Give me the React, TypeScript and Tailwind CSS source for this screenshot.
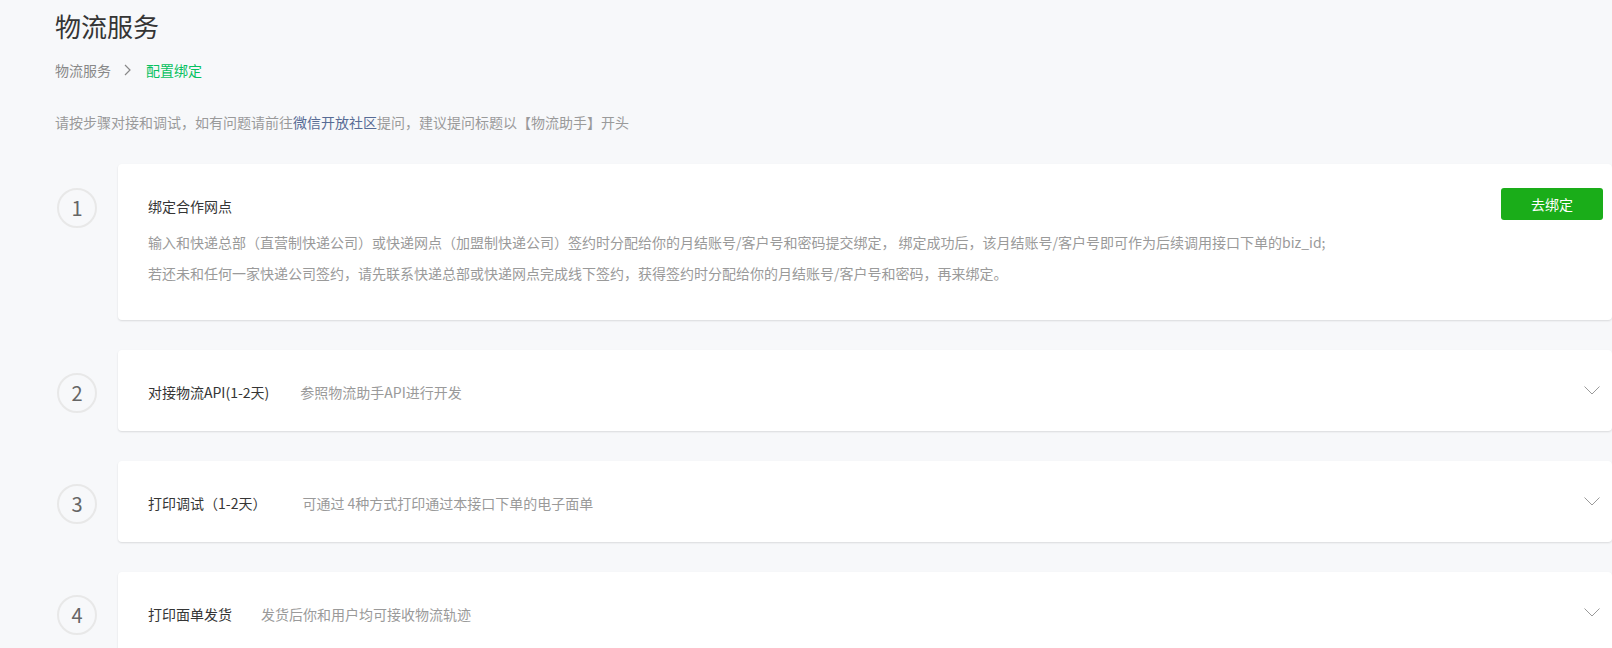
import React from "react";

const font = { fontFamily: '"Noto Sans CJK SC", "Noto Sans", sans-serif' };

function Chevron() {
  return (
    <svg width="16" height="9" viewBox="0 0 16 9" className="mr-[3px]">
      <polyline points="0.5,0.5 8,8 15.5,0.5" fill="none" stroke="#9a9a9a" strokeWidth="1" />
    </svg>
  );
}

function Circle({ n }: { n: number }) {
  return (
    <div className="w-[40px] h-[40px] shrink-0 rounded-full border-2 border-[#e8e8e8] flex items-center justify-center text-[20px] text-[#666] leading-none">
      {n}
    </div>
  );
}

function CollapsedStep({ n, title, desc, gap }: { n: number; title: string; desc: string; gap: string }) {
  return (
    <div className="flex items-start">
      <div className="pt-[23px]">
        <Circle n={n} />
      </div>
      <div className="ml-[21px] flex-1 bg-white rounded-[4px] shadow-[0_1px_2px_rgba(0,0,0,0.12)] h-[81px] pl-[30px] pr-[9px] flex items-center justify-between">
        <div className="flex items-center text-[14px] leading-[20px] pt-[2px]">
          <span className="text-[#353535]">{title}</span>
          <span className={`text-[#9a9a9a] ${gap}`}>{desc}</span>
        </div>
        <Chevron />
      </div>
    </div>
  );
}

export default function App() {
  return (
    <div className="min-h-[648px] w-full bg-[#f7f8fa] overflow-hidden" style={font}>
      <div className="pl-[55px]">
        <h1 className="pt-[8px] text-[26px] leading-[36px] text-[#353535] font-normal">物流服务</h1>
        <div className="mt-[16px] flex items-center text-[14px] leading-[20px]">
          <span className="text-[#888]">物流服务</span>
          <svg width="8" height="12" viewBox="0 0 8 12" className="ml-[13px] mr-[14px]">
            <polyline points="1,1 6,6 1,11" fill="none" stroke="#888" strokeWidth="1.2" />
          </svg>
          <span className="text-[#07c160]">配置绑定</span>
        </div>
        <p className="mt-[31px] text-[14px] leading-[22px] text-[#9a9a9a]">
          请按步骤对接和调试，如有问题请前往<span className="text-[#576b95]">微信开放社区</span>提问，建议提问标题以【物流助手】开头
        </p>

        <div className="mt-[31px] flex flex-col gap-[30px] pl-[2px]">
          <div className="flex items-start">
            <div className="pt-[24px]">
              <Circle n={1} />
            </div>
            <div className="ml-[21px] flex-1 bg-white rounded-[4px] shadow-[0_1px_2px_rgba(0,0,0,0.12)] h-[156px] pl-[30px] pr-[9px] pt-[24px]">
              <div className="flex items-center justify-between h-[32px]">
                <span className="text-[14px] leading-[20px] text-[#353535] pt-[3px]">绑定合作网点</span>
                <button className="w-[102px] h-[32px] rounded-[3px] bg-[#1aad19] text-white text-[14px]">去绑定</button>
              </div>
              <p className="mt-[12px] text-[14px] leading-[20px] text-[#9a9a9a]">
                输入和快递总部（直营制快递公司）或快递网点（加盟制快递公司）签约时分配给你的月结账号/客户号和密码提交绑定， 绑定成功后，该月结账号/客户号即可作为后续调用接口下单的biz_id;
              </p>
              <p className="mt-[11px] text-[14px] leading-[20px] text-[#9a9a9a]">
                若还未和任何一家快递公司签约，请先联系快递总部或快递网点完成线下签约，获得签约时分配给你的月结账号/客户号和密码，再来绑定。
              </p>
            </div>
          </div>

          <CollapsedStep n={2} title="对接物流API(1-2天)" desc="参照物流助手API进行开发" gap="ml-[31px]" />
          <CollapsedStep n={3} title="打印调试（1-2天）" desc="可通过 4种方式打印通过本接口下单的电子面单" gap="ml-[36px]" />
          <CollapsedStep n={4} title="打印面单发货" desc="发货后你和用户均可接收物流轨迹" gap="ml-[29px]" />
        </div>
      </div>
    </div>
  );
}
